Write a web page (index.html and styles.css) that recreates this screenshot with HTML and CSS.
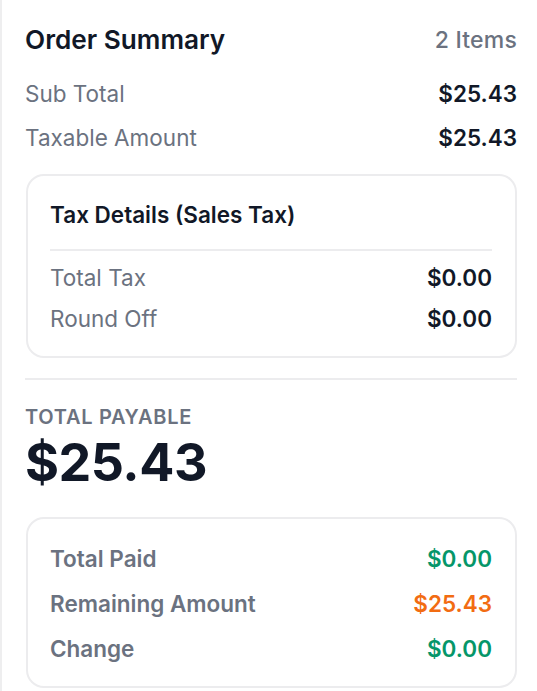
FILE: index.html
```html
<!DOCTYPE html>
<html>
<head>
<meta charset="utf-8">
<link rel="stylesheet" href="styles.css">
</head>
<body>
<div class="panel">
  <div class="head">
    <h2 class="title">Order Summary</h2>
    <span class="count">2 Items</span>
  </div>
  <div class="rows">
    <div class="row"><span class="lbl">Sub Total</span><span class="val">$25.43</span></div>
    <div class="row"><span class="lbl">Taxable Amount</span><span class="val">$25.43</span></div>
  </div>

  <div class="card tax">
    <div class="card-title">Tax Details (Sales Tax)</div>
    <div class="rows tight">
      <div class="row"><span class="lbl">Total Tax</span><span class="val">$0.00</span></div>
      <div class="row"><span class="lbl">Round Off</span><span class="val">$0.00</span></div>
    </div>
  </div>

  <hr class="sep">

  <div class="payable-lbl">TOTAL PAYABLE</div>
  <div class="payable">$25.43</div>

  <div class="card pay">
    <div class="rows strong">
      <div class="row"><span class="lbl">Total Paid</span><span class="val green">$0.00</span></div>
      <div class="row"><span class="lbl">Remaining Amount</span><span class="val orange">$25.43</span></div>
      <div class="row"><span class="lbl">Change</span><span class="val green">$0.00</span></div>
    </div>
  </div>
</div>
</body>
</html>
```
FILE: styles.css
```css
* { box-sizing: border-box; }
html, body { margin: 0; padding: 0; background: #ffffff; }
body { font-family: Inter, "Noto Sans", sans-serif; color: #111827; }
.panel {
  border-left: 2px solid #eeeeef;
  min-height: 691px;
  padding: 24px 20px 0 23px;
  display: flex;
  flex-direction: column;
}
.head {
  display: flex;
  justify-content: space-between;
  align-items: center;
  height: 32px;
  margin-bottom: 21px;
}
.title { margin: 0; font-size: 26.2px; font-weight: 600; color: #111827; line-height: 32px; }
.count { font-size: 23px; color: #6b7280; font-weight: 500; line-height: 32px; letter-spacing: 0.2px; }
.rows { display: flex; flex-direction: column; gap: 12px; }
.row {
  display: flex;
  justify-content: space-between;
  align-items: center;
  height: 32px;
  font-size: 22.5px;
}
.lbl { color: #6b7280; }
.val { font-weight: 600; color: #111827; }
.card {
  border: 2px solid #ececee;
  border-radius: 18px;
  margin-left: 1px;
}
.tax { padding: 23px 23px 22px 22px; margin-top: 21px; }
.card-title {
  font-size: 22.5px;
  font-weight: 600;
  line-height: 32px;
  padding-bottom: 18px;
  border-bottom: 2px solid #ececee;
  margin-bottom: 10px;
}
.rows.tight { gap: 9px; }
.sep { border: 0; border-top: 2px solid #ececee; margin: 20px 0 23px 0; }
.payable-lbl {
  font-size: 20px;
  font-weight: 600;
  color: #6b7280;
  letter-spacing: 0.7px;
  line-height: 28px;
}
.payable {
  font-size: 52px;
  font-weight: 700;
  line-height: 60px;
  margin-top: 2px;
  margin-bottom: 24px;
  letter-spacing: -0.5px;
}
.pay { padding: 23px 23px 22px 22px; }
.rows.strong { gap: 13px; }
.rows.strong .lbl { font-weight: 600; }
.green { color: #059669; }
.orange { color: #f26c12; }
```
